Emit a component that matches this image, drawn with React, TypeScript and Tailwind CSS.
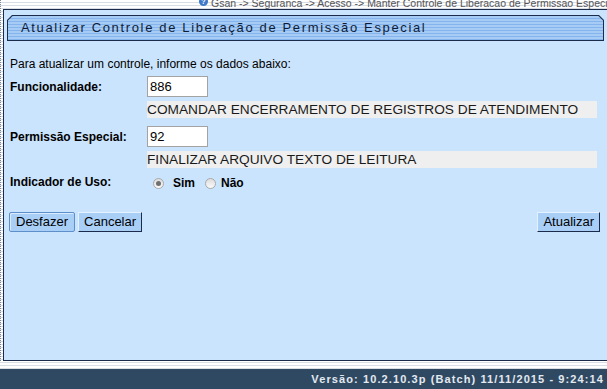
import React from 'react';

const stripes =
  'bg-[repeating-linear-gradient(to_bottom,#ffffff_0px,#ffffff_2px,#d9dee5_2px,#d9dee5_3px)]';

function Radio({ checked }: { checked?: boolean }) {
  return (
    <span className="flex h-[11px] w-[11px] items-center justify-center rounded-full border border-[#a9a9a9] bg-[linear-gradient(to_bottom,#dcdcdc,#fbfbfb)]">
      {checked && <span className="h-[5px] w-[5px] rounded-full bg-[#6f6f6f]" />}
    </span>
  );
}

function Button({ label, focused }: { label: string; focused?: boolean }) {
  return (
    <button
      type="button"
      className={
        focused
          ? 'h-[20px] rounded-[2px] border border-[#5f8fcb] bg-[#a9cff7] px-[6px] text-[13px] leading-[18px] text-black shadow-[inset_1px_1px_0_#d9ecff]'
          : 'h-[20px] border border-t-[#e4f1ff] border-l-[#e4f1ff] border-r-[#1b2b4b] border-b-[#1b2b4b] bg-[#a9cff7] px-[5px] text-[13px] leading-[18px] text-black'
      }
    >
      {label}
    </button>
  );
}

export default function App() {
  return (
    <div
      className={`flex h-[389px] w-[607px] flex-col overflow-hidden font-['Liberation_Sans',Arial,sans-serif] text-[12px] text-black ${stripes}`}
    >
      <div className="border-l border-dotted border-[#7d8898]">
        {/* breadcrumb */}
        <div className="flex h-[9px] items-start overflow-hidden whitespace-nowrap pl-[198px]">
          <span className="-mt-[3px] mr-[3px] flex h-[9px] w-[9px] shrink-0 items-center justify-center rounded-full bg-[#3d78c9] text-[7px] font-bold leading-none text-white">
            ?
          </span>
          <span className="-mt-[2px] text-[10.5px] leading-[11px] text-[#555]">
            Gsan -&gt; Seguranca -&gt; Acesso -&gt; Manter Controle de Liberacao de Permissao Especial
          </span>
        </div>

        {/* main panel */}
        <div className="ml-[2px] h-[352px] border border-r-0 border-[#1b2b4b] bg-[#cbe4fd]">
          <div className="ml-[3px] mt-[5px] w-[597px] bg-[#1b2b4b] p-px [clip-path:polygon(5px_0,calc(100%_-_5px)_0,100%_5px,100%_100%,0_100%,0_5px)]">
            <div className="flex h-[24px] items-center bg-[repeating-linear-gradient(to_bottom,#a6ccf6_0px,#a6ccf6_2px,#85b3ec_2px,#85b3ec_3px)] pl-[13px] [clip-path:polygon(4.6px_0,calc(100%_-_4.6px)_0,100%_4.6px,100%_100%,0_100%,0_4.6px)]">
              <span className="text-[13px] tracking-[1.65px] text-[#0f1c36]">
                Atualizar Controle de Liberação de Permissão Especial
              </span>
            </div>
          </div>

          <div className="pl-[6px] pr-[6px]">
            <p className="mt-[16px] leading-[14px]">Para atualizar um controle, informe os dados abaixo:</p>

            <div className="mt-[5px] grid grid-cols-[137px_1fr]">
              <div className="flex h-[21px] items-center font-bold">Funcionalidade:</div>
              <div>
                <div className="flex h-[21px] w-[61px] items-center border border-[#a3a3a3] bg-white pl-[2px] text-[13px]">
                  886
                </div>
                <div className="mt-[4px] h-[17px] w-[450px] bg-[#efefef] text-[13.7px] leading-[17px] text-[#1a1a1a]">
                  COMANDAR ENCERRAMENTO DE REGISTROS DE ATENDIMENTO
                </div>
              </div>
            </div>

            <div className="mt-[8px] grid grid-cols-[137px_1fr]">
              <div className="flex h-[21px] items-center font-bold">Permissão Especial:</div>
              <div>
                <div className="flex h-[21px] w-[61px] items-center border border-[#a3a3a3] bg-white pl-[2px] text-[13px]">
                  92
                </div>
                <div className="mt-[4px] h-[17px] w-[450px] bg-[#efefef] text-[13.7px] leading-[17px] text-[#1a1a1a]">
                  FINALIZAR ARQUIVO TEXTO DE LEITURA
                </div>
              </div>
            </div>

            <div className="mt-[6px] grid grid-cols-[137px_1fr]">
              <div className="flex h-[16px] items-center font-bold">Indicador de Uso:</div>
              <div className="flex h-[16px] translate-y-[1px] items-center pl-[6px] font-bold">
                <Radio checked />
                <span className="ml-[9px]">Sim</span>
                <span className="ml-[10px]">
                  <Radio />
                </span>
                <span className="ml-[5px]">Não</span>
              </div>
            </div>

            <div className="mt-[22px] flex items-center pr-px">
              <div className="-ml-px flex gap-[3px]">
                <Button label="Desfazer" focused />
                <Button label="Cancelar" />
              </div>
              <div className="ml-auto">
                <Button label="Atualizar" />
              </div>
            </div>
          </div>
        </div>
      </div>

      <div className="h-[8px]" />

      {/* footer */}
      <div className="flex h-[20px] items-center justify-end bg-[#304963] pr-[3px] text-[11px] font-bold tracking-[1.1px] text-[#e3e9f0]">
        Versão: 10.2.10.3p (Batch) 11/11/2015 - 9:24:14
      </div>
    </div>
  );
}
